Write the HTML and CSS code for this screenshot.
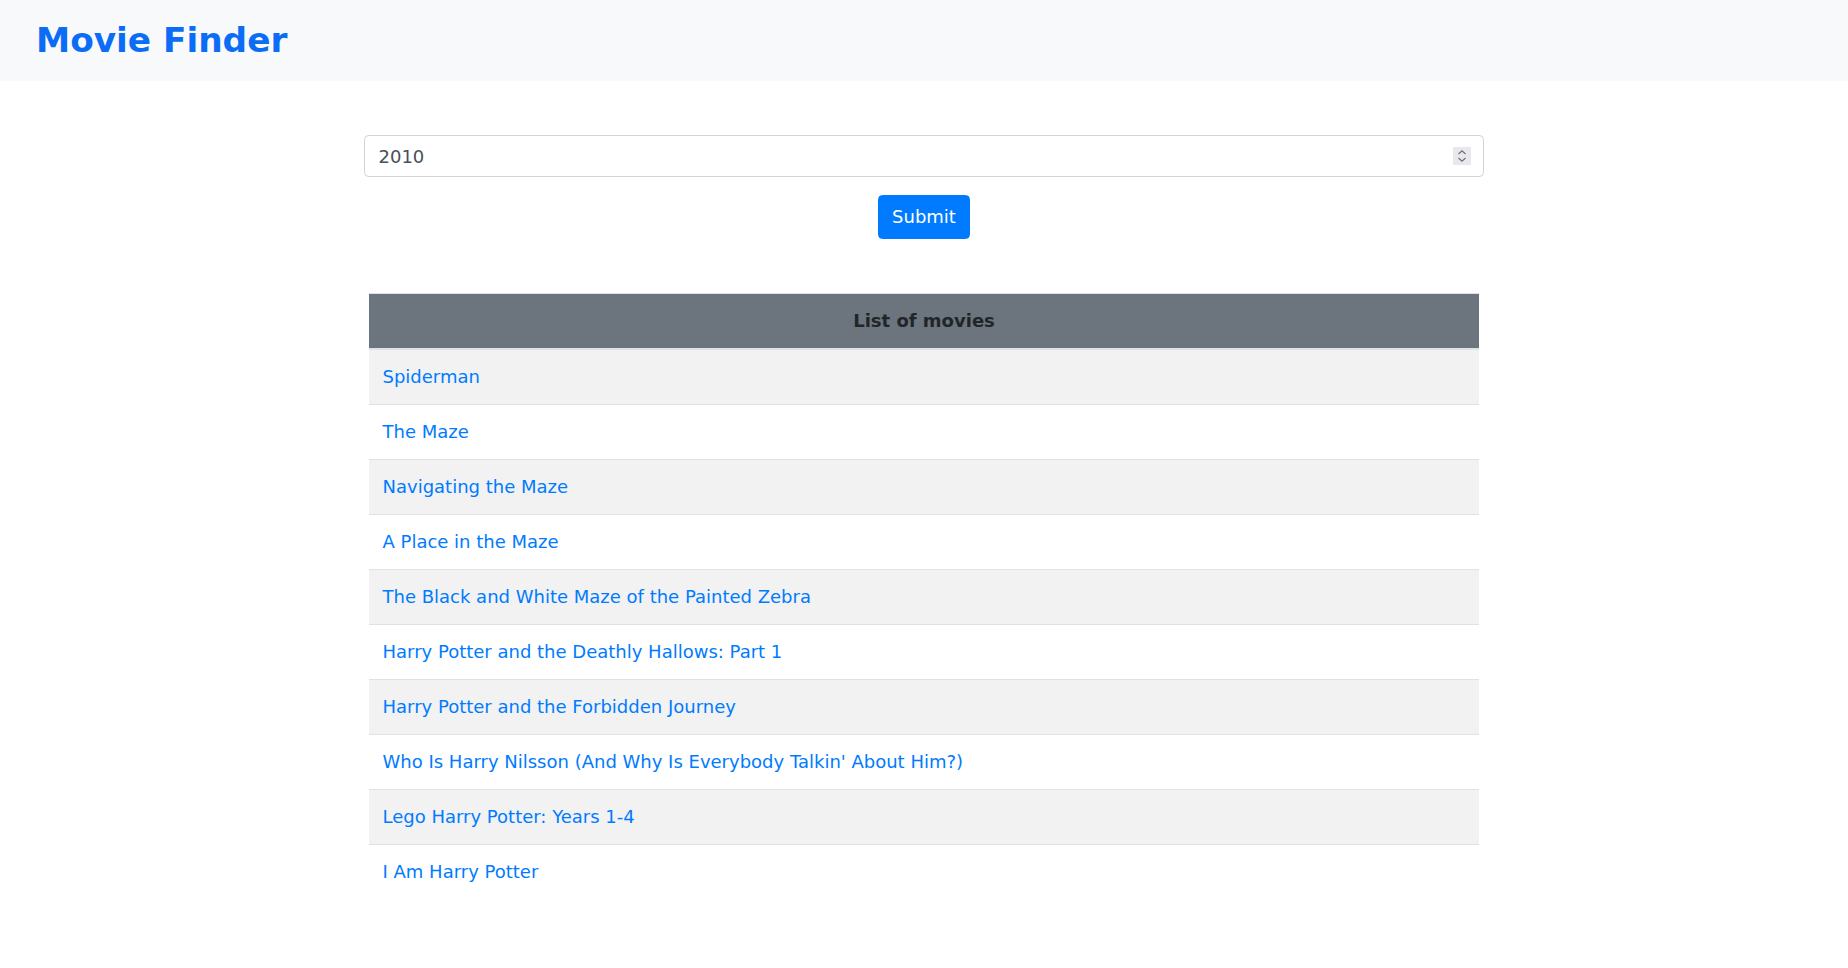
FILE: index.html
```html
<!DOCTYPE html>
<html lang="en">
<head>
<meta charset="utf-8">
<title>Movie Finder</title>
<link rel="stylesheet" href="styles.css">
</head>
<body>
<header class="topbar">
  <h1 class="brand">Movie Finder</h1>
</header>
<main class="page">
  <form class="search">
    <div class="input-wrap">
      <input class="year-input" type="number" value="2010">
      <span class="spin" aria-hidden="true">
        <svg width="18" height="18" viewBox="0 0 18 18"><path d="M5.5 7 L9 3.8 L12.5 7 M5.5 11 L9 14.2 L12.5 11" fill="none" stroke="#6f6f78" stroke-width="1.2"/></svg>
      </span>
    </div>
    <button class="btn-submit" type="button">Submit</button>
  </form>
  <div class="container">
    <table class="movies">
      <thead>
        <tr><th>List of movies</th></tr>
      </thead>
      <tbody>
        <tr><td><a href="#">Spiderman</a></td></tr>
        <tr><td><a href="#">The Maze</a></td></tr>
        <tr><td><a href="#">Navigating the Maze</a></td></tr>
        <tr><td><a href="#">A Place in the Maze</a></td></tr>
        <tr><td><a href="#">The Black and White Maze of the Painted Zebra</a></td></tr>
        <tr><td><a href="#">Harry Potter and the Deathly Hallows: Part 1</a></td></tr>
        <tr><td><a href="#">Harry Potter and the Forbidden Journey</a></td></tr>
        <tr><td><a href="#">Who Is Harry Nilsson (And Why Is Everybody Talkin' About Him?)</a></td></tr>
        <tr><td><a href="#">Lego Harry Potter: Years 1-4</a></td></tr>
        <tr><td><a href="#">I Am Harry Potter</a></td></tr>
      </tbody>
    </table>
  </div>
</main>
</body>
</html>
```

FILE: styles.css
```css
html { font-size: 18px; }
* { box-sizing: border-box; }
body {
  margin: 0;
  font-family: "DejaVu Sans", sans-serif;
  font-size: 1rem;
  line-height: 1.5;
  color: #212529;
  background: #fff;
}
.topbar {
  background: #f8f9fa;
  height: 81px;
  padding: 20px 36px;
}
.brand {
  margin: 0;
  font-size: 34.3px;
  line-height: 40px;
  font-weight: 700;
  color: #0b6cf5;
}
.page {
  padding-top: 54px;
}
.search {
  max-width: 1120px;
  margin: 0 auto;
  display: flex;
  flex-direction: column;
  align-items: center;
}
.input-wrap {
  position: relative;
  width: 100%;
}
.year-input {
  display: block;
  width: 100%;
  height: 42px;
  padding: 0 13.5px;
  font-family: inherit;
  font-size: 1rem;
  color: #495057;
  border: 1px solid #ced4da;
  border-radius: 4.5px;
  background: #fff;
  outline: none;
  -moz-appearance: textfield;
}
.year-input::-webkit-inner-spin-button,
.year-input::-webkit-outer-spin-button {
  -webkit-appearance: none;
  margin: 0;
}
.spin {
  position: absolute;
  right: 13px;
  top: 12px;
  width: 18px;
  height: 18px;
  background: #e9e9ed;
  display: flex;
}
.btn-submit {
  margin-top: 18px;
  font-family: inherit;
  font-size: 1rem;
  line-height: 28px;
  padding: 6.75px 13.5px;
  color: #fff;
  background: #007bff;
  border: 1px solid #007bff;
  border-radius: 4.5px;
  cursor: pointer;
}
.container {
  max-width: 1140px;
  margin: 54px auto 0;
  padding: 0 15px;
}
.movies {
  width: 100%;
  border-collapse: collapse;
}
.movies th,
.movies td {
  padding: 13.5px;
  border-top: 1px solid #dee2e6;
  text-align: left;
}
.movies th {
  text-align: center;
  background: #6c757d;
  font-weight: 700;
  border-bottom: 2px solid #dee2e6;
}
.movies tbody tr:nth-child(odd) {
  background: #f2f2f2;
}
.movies a {
  color: #007bff;
  text-decoration: none;
}
```
